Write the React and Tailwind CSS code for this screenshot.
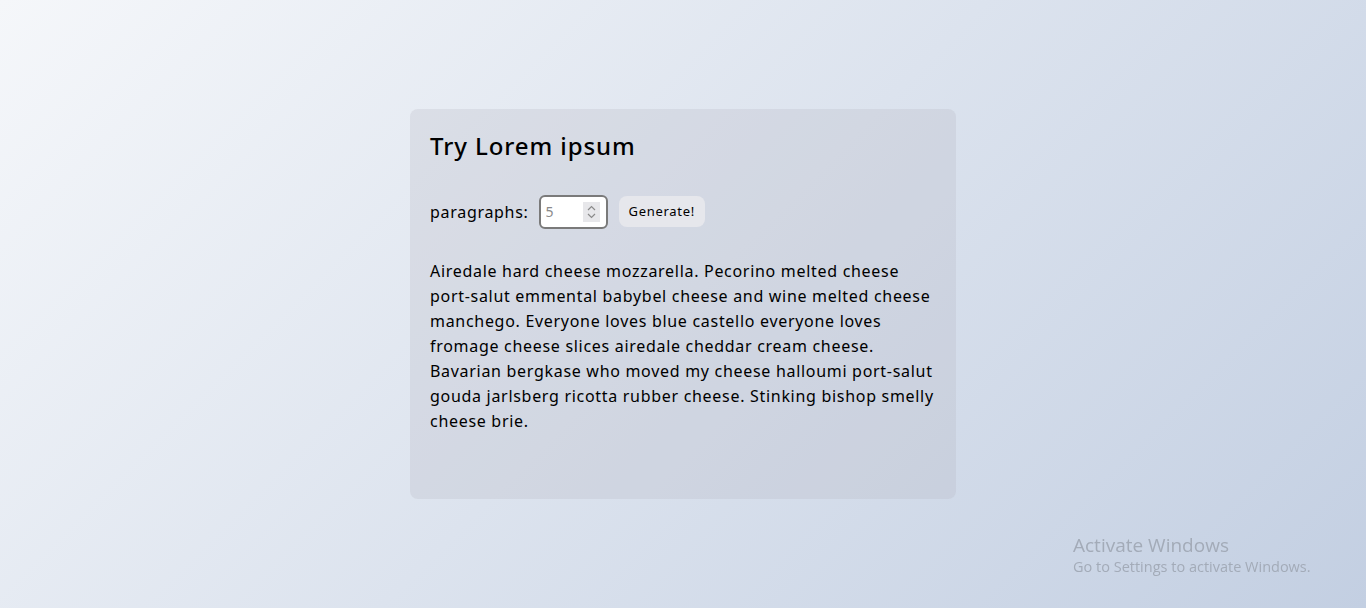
import { useState } from 'react';

const lines = [
  'Airedale hard cheese mozzarella. Pecorino melted cheese',
  'port-salut emmental babybel cheese and wine melted cheese',
  'manchego. Everyone loves blue castello everyone loves',
  'fromage cheese slices airedale cheddar cream cheese.',
  'Bavarian bergkase who moved my cheese halloumi port-salut',
  'gouda jarlsberg ricotta rubber cheese. Stinking bishop smelly',
  'cheese brie.',
];

export default function App() {
  const [count, setCount] = useState('');

  return (
    <div className="min-h-screen flex items-center justify-center bg-[linear-gradient(135deg,#f5f7fa_0%,#c3cfe2_100%)] font-['Noto_Sans',sans-serif] text-black">
      <div className="w-[546px] h-[390px] rounded-lg bg-[rgba(180,180,190,0.25)] p-5">
        <h1 className="-mt-px text-2xl leading-9 font-medium tracking-[0.9px]">Try Lorem ipsum</h1>

        {/* Controls */}
        <div className="flex items-center mt-[31px] h-[33px] tracking-[0.7px]">
          <label className="text-base mr-[10px]">paragraphs:</label>
          <div className="flex items-center w-[69px] h-[34px] bg-white border-2 border-[#7a7a7a] rounded-md pl-[5px] pr-[6px]">
            <input
              type="text"
              value={count}
              placeholder="5"
              onChange={(e) => setCount(e.target.value)}
              className="w-full text-sm outline-none bg-transparent placeholder:text-[#8a8a8a]"
            />
            <div className="flex flex-col items-center justify-center w-[17px] h-[20px] bg-[#e7e7ea] shrink-0">
              <svg width="9" height="6" viewBox="0 0 9 6" fill="none" stroke="#8a8a8a" strokeWidth="1.2">
                <path d="M1 5 4.5 1.5 8 5" />
              </svg>
              <svg width="9" height="6" viewBox="0 0 9 6" fill="none" stroke="#8a8a8a" strokeWidth="1.2" className="mt-[2px]">
                <path d="M1 1 4.5 4.5 8 1" />
              </svg>
            </div>
          </div>
          <button className="ml-[11px] h-[31px] px-[10px] rounded-lg bg-[#e6e7ec] text-[13px]">Generate!</button>
        </div>

        {/* Output */}
        <p className="mt-[31px] text-base leading-[25px] tracking-[0.7px]">
          {lines.map((l, i) => (
            <span key={i} className="block whitespace-nowrap">{l}</span>
          ))}
        </p>
      </div>

      {/* Windows watermark */}
      <div className="fixed left-[1073px] top-[533px] text-[#a3abb8] font-['Open_Sans',sans-serif]">
        <div className="text-[19px] leading-6">Activate Windows</div>
        <div className="text-[14.5px] leading-5">Go to Settings to activate Windows.</div>
      </div>
    </div>
  );
}
